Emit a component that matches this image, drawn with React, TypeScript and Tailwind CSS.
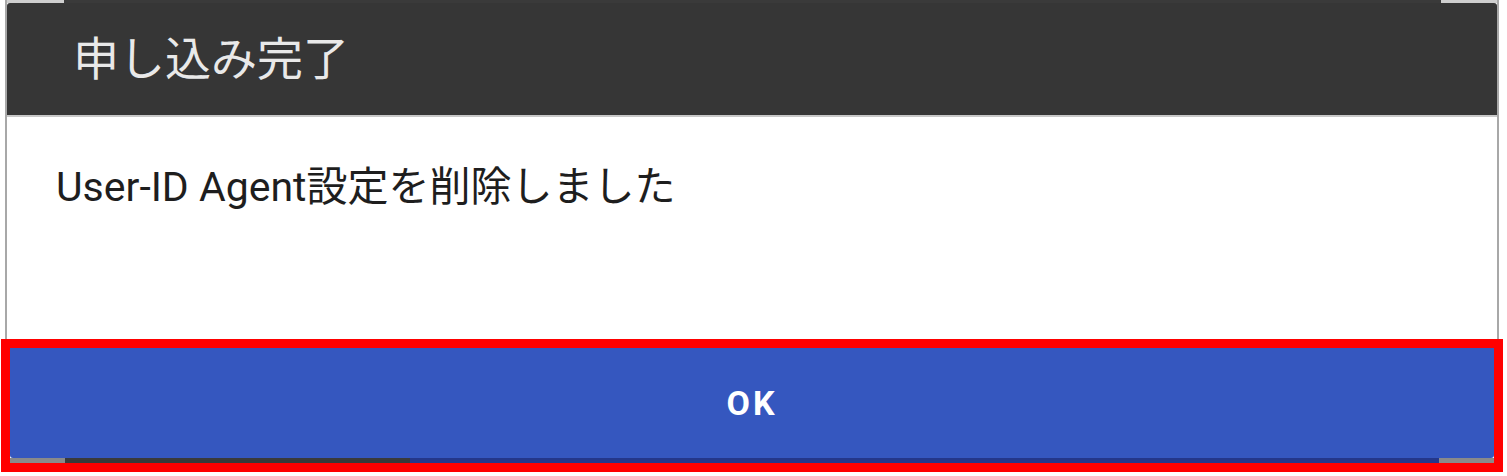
import React from 'react';

const FONT = "font-['Roboto','Noto_Sans_CJK_JP',sans-serif]";

export default function App() {
  return (
    <div className={`w-[1507px] h-[476px] bg-white overflow-hidden flex flex-col ${FONT}`}>
      {/* dialog sheet */}
      <div className="ml-[5px] mr-[8px] flex flex-col border-l-2 border-r-2 border-[#a8a8a8]">
        {/* strip of the screen behind */}
        <div className="h-[3px] flex">
          <div className="w-[57px] bg-[#cfcfcf]" />
          <div className="flex-1 bg-[#3a3a3a]" />
          <div className="w-[56px] bg-[#cfcfcf]" />
        </div>
        <div className="h-[112px] bg-[#363636] rounded-t-[3px] flex items-center pl-[66px]">
          <span className="text-[46px] leading-none text-[#e9e9e9] font-['Noto_Sans_CJK_JP',sans-serif] pb-[8px]">
            申し込み完了
          </span>
        </div>
        <div className="h-[2px] bg-[#c8c8c8]" />
        <div className="h-[222px] bg-white pl-[49px] pt-[50px]">
          <p className="text-[41px] leading-none text-[#1e1e1e]">
            User-ID Agent設定を削除しました
          </p>
        </div>
      </div>

      {/* highlighted button */}
      <div className="ml-[1px] mr-[4px] h-[133px] border-[9px] border-[#ff0000] flex flex-col">
        <button className="h-[110px] bg-[#3557bf] rounded-b-[3px] flex items-center justify-center">
          <span className="text-[34px] font-bold text-white tracking-[3px] leading-none">OK</span>
        </button>
        <div className="flex-1 flex">
          <div className="w-[55px] bg-[#8a8a8a]" />
          <div className="w-[345px] bg-[#3a3a3a]" />
          <div className="flex-1 bg-[#24378a]" />
          <div className="w-[55px] bg-[#8a8a8a]" />
        </div>
      </div>
    </div>
  );
}
